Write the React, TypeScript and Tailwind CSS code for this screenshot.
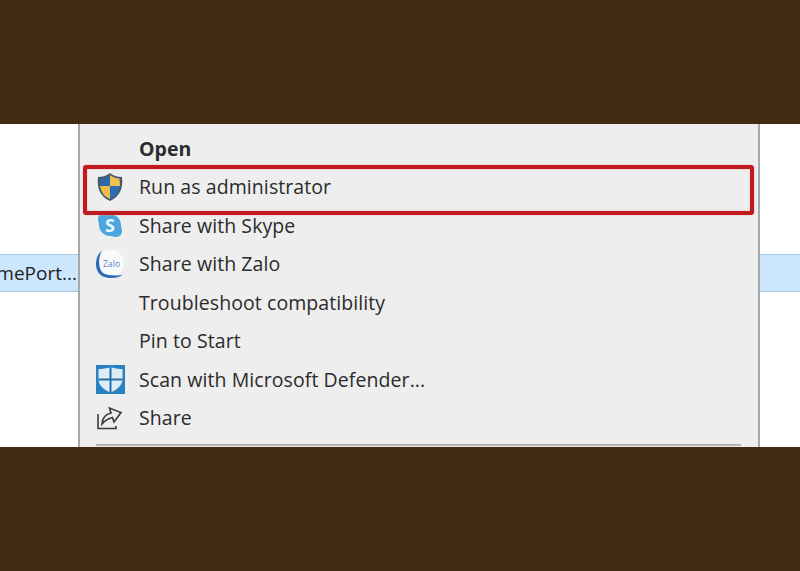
import React from 'react';

function ShieldIcon() {
    return (
        <svg width="28" height="30" viewBox="0 0 28 30">
            <path d="M14 1 C10 4 6 5 2 5 C1 15 3 24 14 29 C25 24 27 15 26 5 C22 5 18 4 14 1Z" fill="#46576b" />
            <path d="M14 3 C11 5 8 6.500 4.500 6.500 L4 14 L14 14Z" fill="#2f68a8" />
            <path d="M14 3 C17 5 20 6.500 23.500 6.500 L24 14 L14 14Z" fill="#f0c050" />
            <path d="M4 14 L14 14 L14 27 C7 24 5 19 4 14Z" fill="#efbc48" />
            <path d="M24 14 L14 14 L14 27 C21 24 23 19 24 14Z" fill="#2c6db4" />
        </svg>
    );
}

function SkypeIcon() {
    return (
        <svg width="26" height="26" viewBox="0 0 26 26">
            <path d="M7 1 C9.500 1 10.500 2 13 2 C19 2 24 7 24 13 C24 15.500 25 16.500 25 19 C25 22.500 22.500 25 19 25 C16.500 25 15.500 24 13 24 C7 24 2 19 2 13 C2 10.500 1 9.500 1 7 C1 3.500 3.500 1 7 1Z" fill="#4aa6dc" />
            <text x="13" y="20" textAnchor="middle" fontSize="18" fontWeight="700" fill="#eef7fc" fontFamily="'Open Sans', sans-serif">S</text>
        </svg>
    );
}

function ZaloIcon() {
    return (
        <svg width="30" height="30" viewBox="0 0 30 30">
            <circle cx="15.500" cy="14" r="13.500" fill="#f8fafc" />
            <path d="M7 1.500 C1 6 -0.500 16 2.500 22 C5 27 10 29 16 29 C21 29 25 28 28 25.500 C23 27 14 27 8 24 C3 20 3 8 7 1.500Z" fill="#2a6ab8" />
            <text x="16.500" y="17.500" textAnchor="middle" fontSize="8.500" fontWeight="400" fill="#5a84bb" fontFamily="'Open Sans', sans-serif">Zalo</text>
        </svg>
    );
}

function DefenderIcon() {
    return (
        <svg width="29" height="29" viewBox="0 0 29 29">
            <rect width="29" height="29" fill="#2a80c0" />
            <path d="M14.500 2 C11 3.500 6 4 2.500 4 L2.500 15 C3.500 21 8 25 14.500 27.500 C21 25 25.500 21 26.500 15 L26.500 4 C23 4 18 3.500 14.500 2Z" fill="#dcedf8" />
            <path d="M14.500 2 L14.500 27.500 M2.500 14.500 L26.500 14.500" stroke="#256fa6" strokeWidth="2" />
        </svg>
    );
}

function ShareIcon() {
    return (
        <svg width="28" height="26" viewBox="0 0 28 26" fill="none" stroke="#3a3a3a" strokeWidth="1.600">
            <path d="M2 9 L2 23.500 L20 23.500 L20 21" />
            <path d="M6 19 C6.500 13 10 9 15 8 L13.500 3 L25 7.500 L18 17 L16.500 12.500 C12 13.500 9 15.500 6 19Z" />
        </svg>
    );
}

const items = [
    { label: 'Open', bold: true, icon: null },
    { label: 'Run as administrator', icon: <ShieldIcon /> },
    { label: 'Share with Skype', icon: <SkypeIcon /> },
    { label: 'Share with Zalo', icon: <ZaloIcon /> },
    { label: 'Troubleshoot compatibility', icon: null },
    { label: 'Pin to Start', icon: null },
    { label: 'Scan with Microsoft Defender...', icon: <DefenderIcon /> },
    { label: 'Share', icon: <ShareIcon /> },
];

export default function App() {
    return (
        <div className="w-[800px] h-[571px] flex flex-col overflow-hidden bg-[#432a13] font-['Open_Sans',sans-serif]">
            <div className="h-[124px] shrink-0" />
            <div className="h-[323px] shrink-0 flex bg-white">
                <div className="w-[78px] shrink-0 pt-[130px]">
                    <div className="h-[38px] bg-[#cbe6fd] border-y border-[#a9c9e0] flex items-center justify-end pr-[1px] text-[19px] text-[#222] overflow-hidden whitespace-nowrap">
                        mePort...
                    </div>
                </div>
                <div className="relative w-[682px] shrink-0 bg-[#eeeeee] border-x-2 border-[#a8a8a8] pt-[5px]">
                    {items.map(item => (
                        <div key={item.label} className="h-[38.500px] flex items-center text-[19.500px] tracking-[0.08px] text-[#2b2b2b]">
                            <div className="w-[59px] shrink-0 flex justify-center pl-[1px]">{item.icon}</div>
                            <span className={item.bold ? 'font-bold' : ''}>{item.label}</span>
                        </div>
                    ))}
                    <div className="mt-[7px] ml-[16px] mr-[17px] h-[2px] bg-[#b5b5b5]" />
                    <div className="absolute left-[3px] top-[41px] w-[671px] h-[50px] rounded-[3px] border-[4px] border-[#bf1a20] shadow-[0_0_2px_#ffa8a8,inset_0_0_2px_#ffa8a8]" />
                </div>
                <div className="w-[40px] shrink-0 pt-[130px]">
                    <div className="h-[38px] bg-[#cbe6fd] border-y border-[#a9c9e0]" />
                </div>
            </div>
        </div>
    );
}
